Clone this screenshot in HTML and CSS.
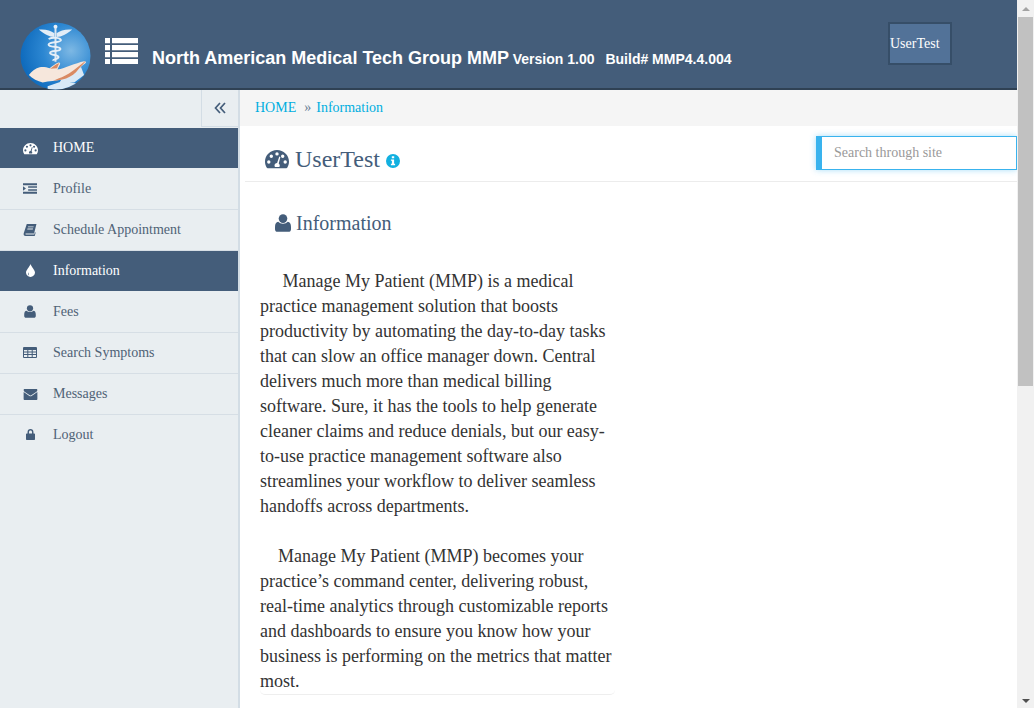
FILE: index.html
```html
<!DOCTYPE html>
<html lang="en">
<head>
<meta charset="utf-8">
<title>MMP</title>
<link rel="stylesheet" href="styles.css">
</head>
<body>
<svg class="defs" width="0" height="0" aria-hidden="true">
  <symbol id="i-dash" viewBox="0 0 24 20">
    <path fill-rule="evenodd" d="M12 1C5.4 1 0 6.2 0 12.6c0 2.3.6 4.4 1.8 6.2.2.2.5.4.8.4h18.8c.3 0 .6-.2.8-.4 1.2-1.800 1.800-3.900 1.800-6.200C24 6.200 18.600 1 12 1zM12 3.200a1.700 1.700 0 1 1 0 3.400 1.700 1.700 0 0 1 0-3.400zM6.300 5.500a1.700 1.700 0 1 1 0 3.400 1.700 1.700 0 0 1 0-3.400zM17.700 5.500a1.700 1.700 0 1 1 0 3.400 1.700 1.700 0 0 1 0-3.400zM3.800 11.300a1.700 1.700 0 1 1 0 3.400 1.700 1.700 0 0 1 0-3.400zM20.200 11.300a1.700 1.700 0 1 1 0 3.400 1.700 1.700 0 0 1 0-3.400zM14.300 7.500l1.100.4-1.700 6.600c.7.500 1.100 1.300 1.100 2.100 0 .6-.2 1.100-.5 1.500H10c-.3-.4-.500-.9-.500-1.500 0-1.400 1.100-2.500 2.500-2.500h.100z"/>
  </symbol>
  <symbol id="i-user" viewBox="0 0 16 18">
    <circle cx="8" cy="4.600" r="4.300"/>
    <path d="M3.200 7.800C4.400 9 6 9.700 8 9.700s3.600-.7 4.800-1.900c2 .3 3.200 2 3.200 5.200v2.200c0 1.600-1 2.600-2.500 2.600h-11C1 17.800 0 16.800 0 15.200V13c0-3.200 1.200-4.900 3.200-5.200z"/>
  </symbol>
</svg>
<div class="window">
  <div class="page">
    <header class="topbar">
      <svg class="logo" viewBox="0 0 72 72" preserveAspectRatio="none" role="img" aria-label="logo">
        <defs>
          <radialGradient id="sky" cx="0.72" cy="0.42" r="0.72">
            <stop offset="0" stop-color="#7db8e4"/>
            <stop offset="0.55" stop-color="#2c87d2"/>
            <stop offset="1" stop-color="#0f6bbd"/>
          </radialGradient>
          <clipPath id="disc"><circle cx="36" cy="36" r="35.500"/></clipPath>
        </defs>
        <circle cx="36" cy="36" r="35.500" fill="url(#sky)"/>
        <g clip-path="url(#disc)">
          <path d="M19 8c7-.6 12 .8 16 4l-.3 4c-5-.4-9.500-2.500-15.700-8zM53 8c-7-.6-12 .8-16 4l.3 4c5-.4 9.500-2.500 15.700-8z" fill="#e3edf7"/>
          <circle cx="36" cy="5" r="2" fill="#e8f0f8"/>
          <path d="M36 6v36" stroke="#dbe7f3" stroke-width="2"/>
          <path d="M29 18c5-2.500 13-1 12.500 1.500C41 22 29 21 29 24c0 3 12 1.500 12 4.500 0 3-11 1.500-10.500 4.500.4 2.500 8.500 1.500 8.500 4 0 2.500-5.500 2-5.500 4" fill="none" stroke="#e6eff8" stroke-width="2"/>
          <path d="M47 53c5-3 9-5 15-5l3 8-10 8H40zM28 68l14-5 16 2-6 8H28z" fill="#d9e9f6"/>
          <path d="M9 56c3-4 7-7 11-8 3-.8 7 0 10 1 3-2 6-5 9-6 1.600-.4 2.200 1 1.400 2.300-.7 1.200-1.700 3.200-2.400 5 8-1.400 18-6.800 27-8.800 1.800-.3 2.600 1 1.300 2.200C63 46 60 49 57 53c-4 4-9 7-14 8-7 1.500-13 1.500-20 3-5-1.500-10.500-4-14-8z" fill="#f6e7dc"/>
          <path d="M66 41.500c.3.500 0 1-.6 1.500C63 46 60 49 57 53c-4 4-9 7-14 8-3 .6-6 1-9 1.300 3-2 8-3.300 11-5 6-3.300 13-9 21-15.800zM40 43.300c-.7 1.200-1.700 3.200-2.400 5.700l-7.100.5c3-2 6-5.500 9.500-6.200z" fill="#d98a63"/>
        </g>
      </svg>
      <svg class="menu-mark" viewBox="0 0 33 26" aria-hidden="true">
        <path d="M0 0h5v5.200H0zM7 0h26v5.200H7zM0 7h5v5.200H0zM7 7h26v5.200H7zM0 14h5v5.200H0zM7 14h26v5.200H7zM0 21h5v5H0zM7 21h26v5H7z"/>
      </svg>
      <h1 class="brand">North American Medical Tech Group MMP <small class="brand-meta">Version 1.00</small><small class="brand-meta build">Build# MMP4.4.004</small></h1>
      <button class="user-btn" type="button">UserTest</button>
    </header>
    <div class="body-row">
      <aside class="sidebar">
        <div class="toggle-row">
          <span class="toggle">
            <svg class="toggle-icon" viewBox="0 0 12 12" aria-hidden="true"><path d="M6 1 1.500 6 6 11M11 1 6.500 6 11 11"/></svg>
          </span>
        </div>
        <nav class="nav">
          <a class="nav-item active"><span class="nav-ico"><svg class="ic ic-dash"><use href="#i-dash"/></svg></span>HOME</a>
          <a class="nav-item"><span class="nav-ico"><svg class="ic ic-indent" viewBox="0 0 15 11"><path d="M0 0h15v2H0zM5.500 3h9.500v1.800H5.500zM5.500 6.200h9.500V8H5.500zM0 9h15v2H0zM0 3 3.200 5.500 0 8z"/></svg></span>Profile</a>
          <a class="nav-item"><span class="nav-ico"><svg class="ic ic-wide" viewBox="0 0 14 13"><path fill-rule="evenodd" d="M3.500 0H14l-2.600 10.300H3C2 10.300 1.700 11 2.600 11.300h9.100l.7-2.500.7.700-1 3.500H2.200C.6 13-.3 11.500.2 10zM5 2.600l-.3 1h6l.3-1zM4.300 5l-.3 1h6l.3-1z"/></svg></span>Schedule Appointment</a>
          <a class="nav-item active"><span class="nav-ico"><svg class="ic ic-drop" viewBox="0 0 9 13"><path fill-rule="evenodd" d="M4.500 0C5.200 2.600 9 6 9 8.600 9 11 7 13 4.500 13S0 11 0 8.600C0 6 3.800 2.600 4.500 0zM2.900 8.200C2.200 8.800 2 9.500 2 10c0 .8.600 1.400 1.200 1.500-.6-.8-.8-1.900-.3-3.300z"/></svg></span>Information</a>
          <a class="nav-item"><span class="nav-ico"><svg class="ic ic-user"><use href="#i-user"/></svg></span>Fees</a>
          <a class="nav-item"><span class="nav-ico"><svg class="ic ic-table" viewBox="0 0 14 11"><path fill-rule="evenodd" d="M1 0h12a1 1 0 0 1 1 1v9a1 1 0 0 1-1 1H1a1 1 0 0 1-1-1V1a1 1 0 0 1 1-1zM1 3v1.500h3.300V3zM5.300 3v1.500h3.400V3zM9.700 3v1.500H13V3zM1 5.500V7h3.300V5.500zM5.300 5.500V7h3.400V5.500zM9.700 5.500V7H13V5.500zM1 8v2h3.300V8zM5.300 8v2h3.400V8zM9.700 8v2H13V8z"/></svg></span>Search Symptoms</a>
          <a class="nav-item"><span class="nav-ico"><svg class="ic ic-mail" viewBox="0 0 15 12"><path d="M1.200 0h12.600c.8 0 1.200.6 1.200 1.200 0 .7-.5 1.300-1 1.700L8.300 6.800c-.5.300-1.100.3-1.600 0L1 2.900C.5 2.500 0 1.900 0 1.200 0 .6.400 0 1.200 0zM0 3.400l6.300 4.200c.7.500 1.700.5 2.400 0L15 3.400v7.400c0 .7-.5 1.200-1.200 1.200H1.200C.5 12 0 11.500 0 10.800z"/></svg></span>Messages</a>
          <a class="nav-item"><span class="nav-ico"><svg class="ic ic-lock" viewBox="0 0 10 12"><path fill-rule="evenodd" d="M5 0c2 0 3.300 1.400 3.300 3.400V5h.9c.5 0 .8.300.8.800v5.400c0 .5-.3.800-.8.800H.8c-.5 0-.8-.3-.8-.8V5.800C0 5.300.3 5 .8 5h.9V3.400C1.700 1.400 3 0 5 0zM3.300 5h3.400V3.400C6.700 2.300 6 1.600 5 1.600s-1.700.7-1.700 1.800z"/></svg></span>Logout</a>
        </nav>
      </aside>
      <main class="content">
        <div class="crumbs"><a class="crumb-link">HOME</a><span class="crumb-sep">»</span><a class="crumb-link">Information</a></div>
        <div class="page-head">
          <div class="page-title">
            <svg class="title-ico"><use href="#i-dash"/></svg>
            <span>UserTest</span>
            <svg class="info-ico" viewBox="0 0 14 14" aria-hidden="true"><path fill-rule="evenodd" d="M7 0a7 7 0 1 1 0 14A7 7 0 0 1 7 0zM5.800 2.300v2h2.400v-2zM4.900 5.400v1.400h1v3H4.900v1.400h4.200V9.800h-1V5.400z"/></svg>
          </div>
          <input class="search" type="text" placeholder="Search through site">
        </div>
        <section class="article">
          <h2 class="article-title"><svg class="article-ico"><use href="#i-user"/></svg>Information</h2>
          <div class="article-body">
            <p class="para">&nbsp;&nbsp;&nbsp;&nbsp;&nbsp;Manage My Patient (MMP) is a medical practice management solution that boosts productivity by automating the day-to-day tasks that can slow an office manager down. Central delivers much more than medical billing software. Sure, it has the tools to help generate cleaner claims and reduce denials, but our easy-to-use practice management software also streamlines your workflow to deliver seamless handoffs across departments.</p>
            <p class="para">&nbsp;&nbsp;&nbsp;&nbsp;Manage My Patient (MMP) becomes your practice’s command center, delivering robust, real-time analytics through customizable reports and dashboards to ensure you know how your business is performing on the metrics that matter most.</p>
          </div>
        </section>
      </main>
    </div>
  </div>
  <div class="scrollbar" aria-hidden="true">
    <span class="arrow up"></span>
    <span class="thumb"></span>
    <span class="arrow down"></span>
  </div>
</div>
</body>
</html>
```

FILE: styles.css
```css
* { box-sizing: border-box; }
html, body { margin: 0; height: 708px; overflow: hidden; background: #fff; }
body { font-family: "Liberation Serif", "Times New Roman", serif; color: #333; }
.defs { display: block; height: 0; }
svg { fill: currentColor; }

.window { display: flex; height: 708px; width: 1034px; }
.page { width: 1017px; display: flex; flex-direction: column; flex: none; }

.topbar {
  height: 90px; flex: none; display: flex; align-items: flex-start;
  background: #445d7a; border-bottom: 2px solid #2f4154; color: #fff;
  padding: 21px 0 0 20px;
}
.logo { width: 71px; height: 68px; margin-top: 1px; flex: none; }
.menu-mark { width: 33px; height: 26px; margin: 17px 0 0 14px; flex: none; fill: #fff; }
.brand {
  margin: 26px 0 0 14px; width: 736px; flex: none;
  font: bold 18px/22px "Liberation Sans", Arial, sans-serif; white-space: nowrap;
}
.brand-meta { font-size: 14px; margin-left: -1px; }
.build { margin-left: 11px; }
.user-btn {
  width: 64px; height: 43px; margin: 1px 0 0 0; padding: 0; flex: none;
  background: #527298; border: 2px solid #364e68; color: #fff; text-align: left;
  font: 14px "Liberation Serif", serif;
}

.body-row { flex: 1; display: flex; min-height: 0; }
.sidebar { width: 240px; flex: none; background: #e9eef1; border-right: 2px solid #d3dde5; }
.toggle-row { height: 38px; display: flex; justify-content: flex-end; }
.toggle {
  width: 37px; height: 37px; display: flex; align-items: center; justify-content: center;
  border: 1px solid #d3dde5; border-top: 0; border-right: 0; background: #e9eef1;
}
.toggle-icon { width: 12px; height: 12px; fill: none; stroke: #445d7a; stroke-width: 1.700; }
.nav { display: flex; flex-direction: column; }
.nav-item {
  height: 41px; display: flex; align-items: center; font-size: 14px;
  color: #4f6276; border-bottom: 1px solid #d6dee5;
}
.nav-item:last-child { border-bottom-color: transparent; }
.nav-item.active { background: #445d7a; color: #fff; border-bottom-color: #e9eef1; }
.nav-ico { width: 53px; padding-left: 7px; display: flex; justify-content: center; align-items: center; color: #445d7a; flex: none; }
.active .nav-ico { color: #fff; }
.ic { display: block; }
.ic-dash { width: 15px; height: 13px; }
.ic-indent { width: 14px; height: 11px; margin-top: -1px; }
.ic-wide { width: 14px; height: 12px; }
.ic-table { width: 14px; height: 11px; margin-top: -2px; }
.ic-drop { width: 9px; height: 13px; margin-top: -2px; }
.ic-user { width: 12px; height: 13px; margin-top: -1px; }
.ic-mail { width: 15px; height: 11px; }
.ic-lock { width: 9px; height: 11px; margin-top: -1px; }

.content { flex: 1; min-width: 0; display: flex; flex-direction: column; }
.crumbs {
  height: 36px; flex: none; background: #f5f5f5; padding-left: 15px;
  display: flex; align-items: center; font-size: 14px; color: #00aee0;
}
.crumb-sep { margin: 0 5px 0 8px; color: #6a7f94; }
.page-head {
  height: 56px; flex: none; margin-left: 5px; padding: 10px 0 0 20px;
  display: flex; justify-content: space-between; align-items: flex-start;
  border-bottom: 1px solid #ececec;
}
.page-title { display: flex; align-items: center; font-size: 24px; color: #445d7a; margin-top: 5px; height: 36px; }
.title-ico { width: 24px; height: 20px; margin-right: 6px; }
.info-ico { width: 14px; height: 14px; margin: 3px 0 0 6px; fill: #12b0e0; }
.search {
  width: 201px; height: 34px; padding: 0 0 0 12px; border: 1px solid #39b3ee; border-left-width: 6px;
  background: #fff; font: 14px "Liberation Serif", serif; color: #555; outline: 0;
  box-shadow: 0 0 6px rgba(60, 180, 240, .45); border-radius: 0;
}
.search::placeholder { color: #999; opacity: 1; }

.article { width: 370px; margin-left: 5px; padding: 0 0 0 15px; }
.article-title {
  display: flex; margin: 0; padding: 28px 0 0 15px; height: 87px;
  align-items: flex-start;
  font: 20px/26px "Liberation Serif", serif; color: #445d7a;
}
.article-ico { width: 16px; height: 18px; margin: 4px 5px 0 0; }
.article-body { border-bottom: 1px solid #eee; border-radius: 0 0 5px 5px; height: 426px; }
.para { margin: 0 0 25px; font-size: 18px; line-height: 25px; color: #333; }
.para:last-child { margin-bottom: 0; }

.scrollbar { width: 17px; flex: none; background: #f1f1f1; display: flex; flex-direction: column; align-items: center; }
.arrow { width: 0; height: 0; border-left: 4px solid transparent; border-right: 4px solid transparent; flex: none; }
.up { border-bottom: 4px solid #a3a3a3; margin: 7px 0 6px; }
.down { border-top: 4px solid #505050; margin: auto 0 5px; }
.thumb { width: 15px; height: 369px; background: #c1c1c1; flex: none; }
```
